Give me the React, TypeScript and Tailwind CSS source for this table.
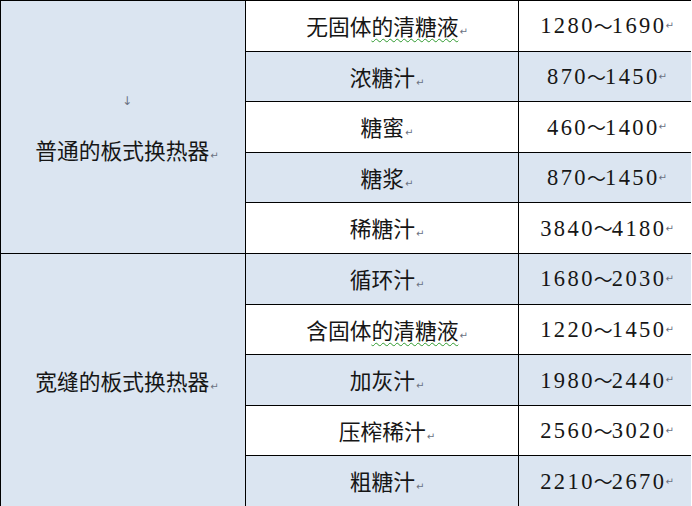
const rows = [
  { name: "无固体的清糖液", wavy: 3, range: ["1280", "1690"] },
  { name: "浓糖汁", range: ["870", "1450"] },
  { name: "糖蜜", range: ["460", "1400"] },
  { name: "糖浆", range: ["870", "1450"] },
  { name: "稀糖汁", range: ["3840", "4180"] },
  { name: "循环汁", range: ["1680", "2030"] },
  { name: "含固体的清糖液", wavy: 3, range: ["1220", "1450"] },
  { name: "加灰汁", range: ["1980", "2440"] },
  { name: "压榨稀汁", range: ["2560", "3020"] },
  { name: "粗糖汁", range: ["2210", "2670"] },
];

const cjk = "font-['Noto_Sans_CJK_SC',sans-serif]";

function Mark() {
  return (
    <span className="ml-px text-[10px] leading-none text-gray-500 font-['DejaVu_Sans',sans-serif]">
      ↵
    </span>
  );
}

function Name({ text, wavy }: { text: string; wavy?: number }) {
  if (!wavy) return <>{text}</>;
  const head = text.slice(0, wavy);
  const tail = text.slice(wavy);
  return (
    <>
      {head}
      <span className="underline decoration-wavy decoration-[#2e9a2e] decoration-1 underline-offset-[3px]">
        {tail}
      </span>
    </>
  );
}

export default function App() {
  return (
    <div className="w-[692px] h-[506px] overflow-hidden bg-white">
      <div className="grid grid-cols-[245px_273px_173px] grid-rows-[repeat(10,50.6px)] w-[691px] border-r border-black text-[#161616]">
        {rows.map((r, i) => {
          const blue = i % 2 === 1;
          const bg = blue ? "bg-[#dbe5f1]" : "bg-white";
          return (
            <div key={r.name} className="contents">
              {i === 0 && (
                <div className="row-span-5 border-l border-t border-black bg-[#dbe5f1] flex flex-col items-center justify-center pt-[6px] pl-[8px]">
                  <span className="h-[12px] leading-[12px] text-[12px] text-gray-500 font-['DejaVu_Sans',sans-serif]">
                    ↓
                  </span>
                  <span className={`mt-[28px] h-[30px] leading-[30px] text-[21.75px] ${cjk}`}>
                    普通的板式换热器
                    <Mark />
                  </span>
                </div>
              )}
              {i === 5 && (
                <div className="row-span-5 border-l border-t border-black bg-[#dbe5f1] flex items-center justify-center pt-[2px] pl-[8px]">
                  <span className={`text-[21.75px] leading-[30px] ${cjk}`}>
                    宽缝的板式换热器
                    <Mark />
                  </span>
                </div>
              )}
              <div
                className={`border-l border-t border-black ${bg} flex items-center justify-center pt-[1px] pl-[10px] text-[21.75px] ${cjk}`}
              >
                <span>
                  <Name text={r.name} wavy={r.wavy} />
                  <Mark />
                </span>
              </div>
              <div
                className={`border-l border-t border-black ${bg} flex items-center justify-center pt-[1px] pl-[4px]`}
              >
                <span className="flex items-center">
                  <span className="font-['Liberation_Serif',serif] text-[22.5px] tracking-[2.4px]">
                    {r.range[0]}
                  </span>
                  <span className={`text-[19px] ${cjk} -mx-[1px]`}>～</span>
                  <span className="font-['Liberation_Serif',serif] text-[22.5px] tracking-[2.4px] mr-[-2px]">
                    {r.range[1]}
                  </span>
                  <Mark />
                </span>
              </div>
            </div>
          );
        })}
      </div>
    </div>
  );
}
